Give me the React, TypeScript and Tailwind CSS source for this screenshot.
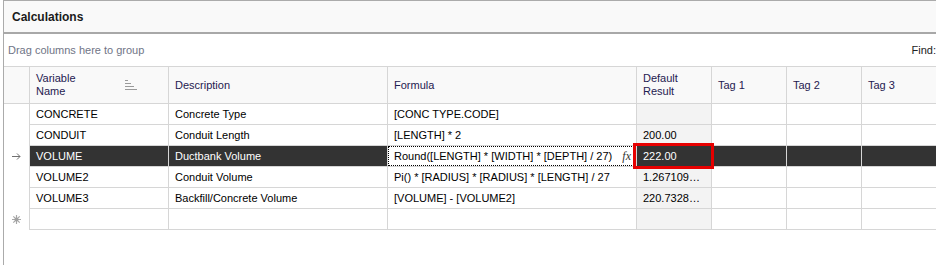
import React from "react";

const rows = [
  { v: "CONCRETE", d: "Concrete Type", f: "[CONC TYPE.CODE]", r: "" },
  { v: "CONDUIT", d: "Conduit Length", f: "[LENGTH] * 2", r: "200.00" },
  { v: "VOLUME", d: "Ductbank Volume", f: "Round([LENGTH] * [WIDTH] * [DEPTH] / 27)", r: "222.00", sel: true },
  { v: "VOLUME2", d: "Conduit Volume", f: "Pi() * [RADIUS] * [RADIUS] * [LENGTH] / 27", r: "1.267109…" },
  { v: "VOLUME3", d: "Backfill/Concrete Volume", f: "[VOLUME] - [VOLUME2]", r: "220.7328…" },
];

function SortIcon() {
  return (
    <svg width="13" height="12" viewBox="0 0 13 12" className="shrink-0">
      <rect x="0" y="1" width="3" height="1" fill="#9a9a9a" />
      <rect x="0" y="4" width="6" height="1" fill="#9a9a9a" />
      <rect x="0" y="7" width="9" height="1" fill="#9a9a9a" />
      <rect x="0" y="10" width="12" height="1" fill="#9a9a9a" />
    </svg>
  );
}

function Arrow() {
  return (
    <svg width="9" height="7" viewBox="0 0 9 7">
      <path d="M0 3.5H8M5 0.5L8 3.5L5 6.5" stroke="#707070" strokeWidth="1" fill="none" />
    </svg>
  );
}

function Star() {
  return (
    <svg width="9" height="9" viewBox="0 0 9 9">
      <path d="M4.5 0V9M0 4.5H9M1.3 1.3L7.7 7.7M7.7 1.3L1.3 7.7" stroke="#a8a8a8" strokeWidth="1.2" />
      <circle cx="4.5" cy="4.5" r="2" fill="#a0a0a0" />
    </svg>
  );
}

export default function App() {
  const font = "font-['Liberation_Sans',Arial,sans-serif]";
  return (
    <div className={`relative w-[936px] h-[265px] overflow-hidden bg-white text-[11px] text-black ${font}`}>
      {/* Title bar */}
      <div className="ml-[3px] h-[34px] border-t border-l border-b-2 border-t-[#ababab] border-l-[#ababab] border-b-[#a8a8a8] bg-[#f9f9f9] flex items-center pl-[8px]">
        <span className="font-bold text-[12px] text-[#1b1b1b]">Calculations</span>
      </div>
      {/* Grid panel */}
      <div className="ml-[3px] h-[231px] border-l border-[#ababab]">
        <div className="h-[32px] flex items-center justify-between pl-[4px] pr-0">
          <span className="text-[#707586]">Drag columns here to group</span>
          <span className="text-[#222]">Find:</span>
        </div>
        {/* header */}
        <div className="flex h-[38px] border-t border-b border-[#d6d6d6] bg-[#f9f9f9] text-[#1f2050] whitespace-nowrap">
          <div className="w-[26px] shrink-0 border-r border-[#d6d6d6]" />
          <div className="w-[139px] shrink-0 border-r border-[#d6d6d6] flex items-center pl-[6px] pr-[30px] justify-between">
            <div className="leading-[13px]">
              <div>Variable</div>
              <div>Name</div>
            </div>
            <SortIcon />
          </div>
          <div className="w-[219px] shrink-0 border-r border-[#d6d6d6] flex items-center pl-[6px]">Description</div>
          <div className="w-[249px] shrink-0 border-r border-[#d6d6d6] flex items-center pl-[6px]">Formula</div>
          <div className="w-[75px] shrink-0 border-r border-[#d6d6d6] flex items-center pl-[6px]">
            <div className="leading-[13px]">
              <div>Default</div>
              <div>Result</div>
            </div>
          </div>
          <div className="w-[75px] shrink-0 border-r border-[#d6d6d6] flex items-center pl-[6px]">Tag 1</div>
          <div className="w-[75px] shrink-0 border-r border-[#d6d6d6] flex items-center pl-[6px]">Tag 2</div>
          <div className="w-[80px] shrink-0 flex items-center pl-[6px]">Tag 3</div>
        </div>
        {/* rows */}
        {rows.map((r) => {
          const dark = r.sel;
          const cell = `shrink-0 border-r border-b border-[#d6d6d6] flex items-center pl-[6px] overflow-hidden whitespace-nowrap ${dark ? "bg-[#333333] text-white" : ""}`;
          return (
            <div key={r.v} className="flex h-[21px]">
              <div className="w-[25px] shrink-0 flex items-center justify-center">{dark ? <Arrow /> : null}</div>
              <div className={`w-[140px] border-l ${cell}`}>{r.v}</div>
              <div className={`w-[219px] ${cell}`}>{r.d}</div>
              {dark ? (
                <div className="w-[249px] shrink-0 border-r border-b border-[#d6d6d6] bg-white p-0">
                  <div className="h-[20px] border border-dotted border-black flex items-center justify-between pl-[5px] pr-[4px] whitespace-nowrap">
                    <span>{r.f}</span>
                    <span className="italic font-['Liberation_Serif',serif] text-[12px] text-[#333]">fx</span>
                  </div>
                </div>
              ) : (
                <div className={`w-[249px] ${cell}`}>{r.f}</div>
              )}
              <div className={`w-[75px] ${cell} ${dark ? "" : "bg-[#f3f3f3]"}`}>{r.r}</div>
              <div className={`w-[75px] ${cell}`} />
              <div className={`w-[75px] ${cell}`} />
              <div className={`w-[80px] ${cell} border-r-0`} />
            </div>
          );
        })}
        {/* new row */}
        <div className="flex h-[21px]">
          <div className="w-[25px] shrink-0 flex items-center justify-center">
            <Star />
          </div>
          <div className="w-[140px] shrink-0 border-l border-r border-b border-[#d6d6d6]" />
          <div className="w-[219px] shrink-0 border-r border-b border-[#d6d6d6]" />
          <div className="w-[249px] shrink-0 border-r border-b border-[#d6d6d6]" />
          <div className="w-[75px] shrink-0 border-r border-b border-[#d6d6d6] bg-[#f3f3f3]" />
          <div className="w-[75px] shrink-0 border-r border-b border-[#d6d6d6]" />
          <div className="w-[75px] shrink-0 border-r border-b border-[#d6d6d6]" />
          <div className="w-[80px] shrink-0 border-b border-[#d6d6d6]" />
        </div>
      </div>
      {/* red highlight annotation */}
      <div className="absolute left-[633px] top-[143px] w-[81px] h-[26px] border-[3px] border-[#e60000]" />
    </div>
  );
}
